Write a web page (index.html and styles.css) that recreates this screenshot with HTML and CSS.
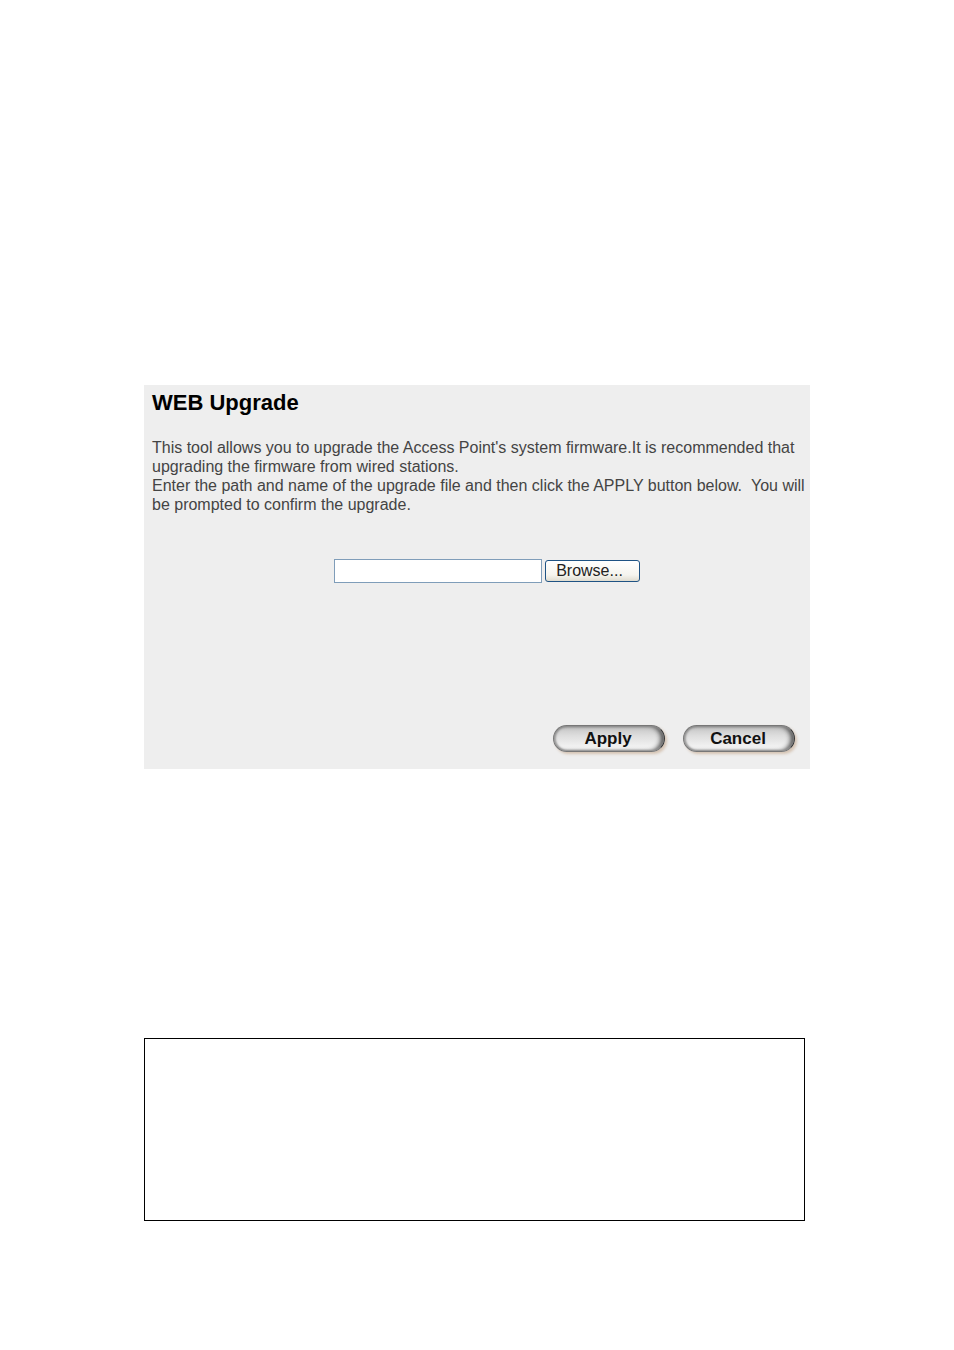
FILE: index.html
```html
<!DOCTYPE html>
<html lang="en">
<head>
    <meta charset="utf-8">
    <title>WEB Upgrade</title>
    <link rel="stylesheet" href="styles.css">
</head>
<body>
    <form class="panel">
        <h1>WEB Upgrade</h1>
        <p class="info">
            This tool allows you to upgrade the Access Point's system firmware.It is recommended that<br>
            upgrading the firmware from wired stations.<br>
            Enter the path and name of the upgrade file and then click the APPLY button below. &nbsp;You will<br>
            be prompted to confirm the upgrade.
        </p>

        <div class="file-row">
            <input type="text" class="file-path" aria-label="Upgrade file">
            <button type="button" class="browse">Browse...</button>
        </div>

        <div class="actions">
            <button type="submit" class="pill">Apply</button>
            <button type="reset" class="pill">Cancel</button>
        </div>
    </form>

    <div class="note-box"></div>
</body>
</html>
```

FILE: styles.css
```css
body {
    margin: 0;
    padding: 385px 144px 128px;
    background: white;
    font-family: "Liberation Sans", Arial, sans-serif;
}

.panel {
    background: #eeeeee;
    padding: 4px 15px 17px 8px;
}

h1 {
    margin: 0 0 21px;
    font-size: 22px;
    line-height: 28px;
    color: black;
}

.info {
    margin: 0;
    font-size: 16px;
    line-height: 19px;
    color: #444;
    white-space: nowrap;
}

.file-row {
    display: flex;
    justify-content: center;
    align-items: center;
    gap: 3px;
    margin: 45px 0 142px 27px;
}

.file-path {
    width: 208px;
    height: 24px;
    box-sizing: border-box;
    padding: 2px 4px;
    border: 1px solid #7f9db9;
    background: white;
    font-family: inherit;
    font-size: 16px;
}

.browse {
    width: 95px;
    height: 22px;
    padding: 0 6px 0 0;
    border: 1px solid #1f5384;
    border-radius: 3px;
    background: linear-gradient(#ffffff, #f5f4ee 70%, #dfdcd0);
    font-family: inherit;
    font-size: 16px;
    line-height: 20px;
    color: #222;
}

.actions {
    display: flex;
    justify-content: flex-end;
    gap: 18px;
}

/* metallic rounded buttons */
.pill {
    width: 112px;
    height: 27px;
    padding: 0 2px 0 0;
    border: 1px solid #777;
    border-right-color: #333;
    border-radius: 14px;
    background: linear-gradient(#c4c4c4, #dedede 40%, #fafafa);
    box-shadow: inset 0 1px 2px #8e8e8e, inset 0 -1px 2px #999, inset -4px 0 5px -1px #444, inset 2px 0 2px #aaa, 2px 2px 3px #d5c3b2;
    font-family: inherit;
    font-size: 17px;
    font-weight: bold;
    color: #111;
}

.note-box {
    height: 181px;
    margin: 269px 5px 0 0;
    border: 1px solid black;
}
```
